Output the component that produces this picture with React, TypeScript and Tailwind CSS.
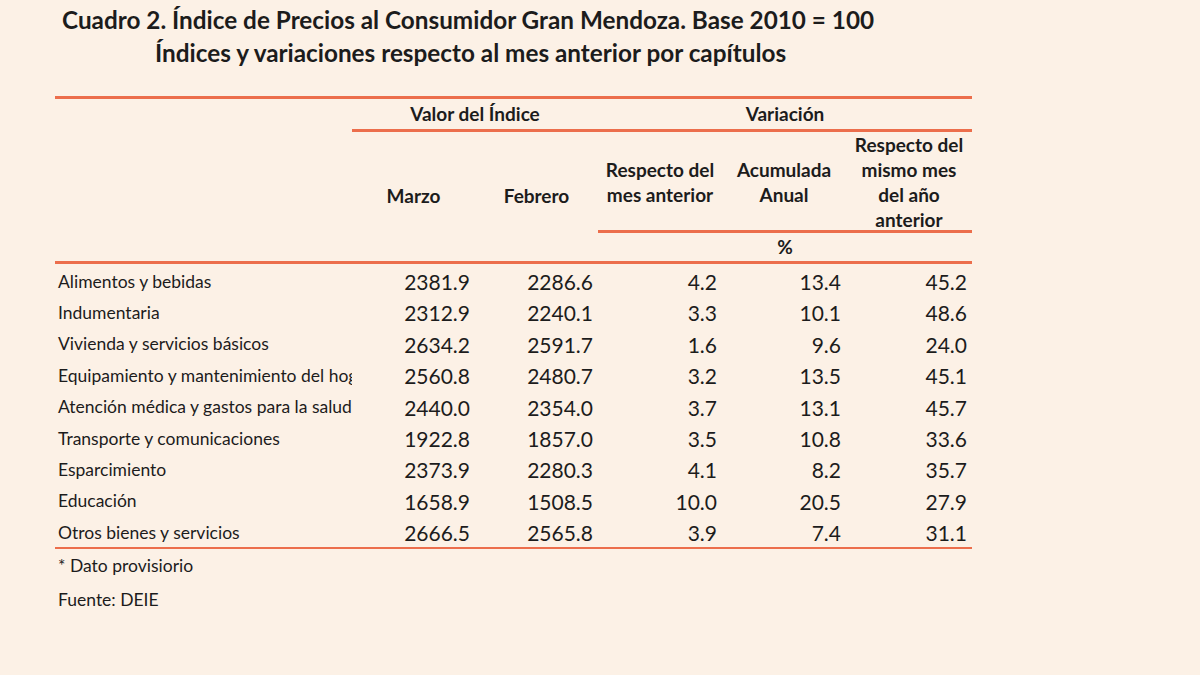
import React from "react";

const ROWS: [string, string, string, string, string, string][] = [
	["Alimentos y bebidas", "2381.9", "2286.6", "4.2", "13.4", "45.2"],
	["Indumentaria", "2312.9", "2240.1", "3.3", "10.1", "48.6"],
	["Vivienda y servicios básicos", "2634.2", "2591.7", "1.6", "9.6", "24.0"],
	["Equipamiento y mantenimiento del hogar", "2560.8", "2480.7", "3.2", "13.5", "45.1"],
	["Atención médica y gastos para la salud", "2440.0", "2354.0", "3.7", "13.1", "45.7"],
	["Transporte y comunicaciones", "1922.8", "1857.0", "3.5", "10.8", "33.6"],
	["Esparcimiento", "2373.9", "2280.3", "4.1", "8.2", "35.7"],
	["Educación", "1658.9", "1508.5", "10.0", "20.5", "27.9"],
	["Otros bienes y servicios", "2666.5", "2565.8", "3.9", "7.4", "31.1"],
];

const COLS = "grid grid-cols-[297px_123px_123px_124px_124px_126px]";

export default function App() {
	return (
		<div className="w-[1200px] h-[675px] overflow-hidden bg-[#fcf1e6] text-[#1c1c1c] font-['Lato','Liberation_Sans',sans-serif]">
			<div className="pt-[3px] font-bold text-[24.3px] leading-[33px]">
				<div className="pl-[62px]">
					Cuadro 2. Índice de Precios al Consumidor Gran Mendoza. Base 2010 = 100
				</div>
				<div className="pl-[155px]">
					Índices y variaciones respecto al mes anterior por capítulos
				</div>
			</div>

			<div className="ml-[55px] mt-[27px] w-[917px]">
				{/* header */}
				<div className={`${COLS} border-t-[3px] border-[#ec6e4c] font-bold text-[19px]`}>
					<div />
					<div className="col-span-2 h-[33px] flex items-center justify-center border-b-[3px] border-[#ec6e4c]">
						Valor del Índice
					</div>
					<div className="col-span-3 h-[33px] flex items-center justify-center border-b-[3px] border-[#ec6e4c]">
						Variación
					</div>

					<div className="row-span-2" />
					<div className="row-span-2 flex items-center justify-center">Marzo</div>
					<div className="row-span-2 flex items-center justify-center">Febrero</div>
					<div className="col-span-3 h-[101px] grid grid-cols-[124px_124px_126px] border-b-[3px] border-[#ec6e4c] leading-[25px] text-center">
						<div className="flex items-center justify-center">
							<div>
								Respecto del
								<br />
								mes anterior
							</div>
						</div>
						<div className="flex items-center justify-center">
							<div>
								Acumulada
								<br />
								Anual
							</div>
						</div>
						<div className="flex items-center justify-center">
							<div>
								Respecto del
								<br />
								mismo mes
								<br />
								del año
								<br />
								anterior
							</div>
						</div>
					</div>
					<div className="col-span-3 h-[28px] flex items-center justify-center">%</div>
				</div>

				{/* body */}
				<div className="border-t-[3px] border-b-2 border-[#ec6e4c]">
					{ROWS.map((row) => (
						<div key={row[0]} className={`${COLS} h-[31.4px] pt-[2px] items-center`}>
							<div className="pl-[3px] overflow-hidden whitespace-nowrap text-[17.5px]">{row[0]}</div>
							{row.slice(1).map((v, i) => (
								<div key={i} className="pr-[5px] text-right text-[21px]">
									{v}
								</div>
							))}
						</div>
					))}
				</div>

				<div className="pl-[3px] text-[17.5px]">
					<div className="mt-[7px] h-[20px] leading-[20px]">* Dato provisiorio</div>
					<div className="mt-[14px] h-[20px] leading-[20px]">Fuente: DEIE</div>
				</div>
			</div>
		</div>
	);
}
